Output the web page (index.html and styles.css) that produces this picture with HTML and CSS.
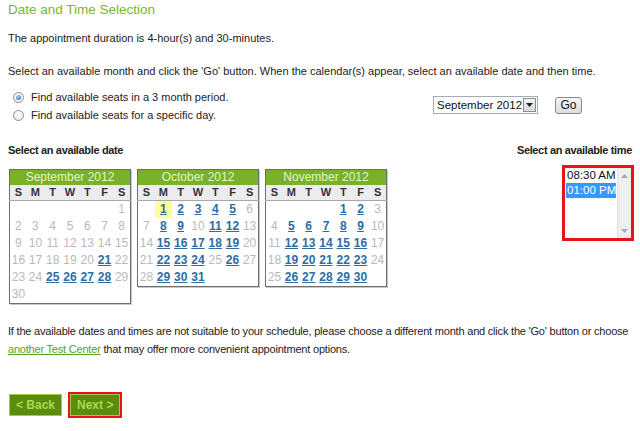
FILE: index.html
```html
<!DOCTYPE html>
<html>
<head>
<meta charset="utf-8">
<link rel="stylesheet" href="styles.css">
</head>
<body>
<div class="page">
  <h1 class="title">Date and Time Selection</h1>
  <p class="p1">The appointment duration is 4-hour(s) and 30-minutes.</p>
  <p class="p2">Select an available month and click the 'Go' button. When the calendar(s) appear, select an available date and then time.</p>

  <div class="options">
    <div class="radios">
      <div class="radio-row"><span class="radio checked"></span>Find available seats in a 3 month period.</div>
      <div class="radio-row"><span class="radio"></span>Find available seats for a specific day.</div>
    </div>
    <div class="month-pick">
      <div class="select">
        <span class="select-text">September 2012</span>
        <span class="select-btn"><svg width="7" height="4" viewBox="0 0 7 4"><path d="M0 0H7L3.5 4Z" fill="#222"/></svg></span>
      </div>
      <div class="go">Go</div>
    </div>
  </div>

  <div class="labels"><b>Select an available date</b><b>Select an available time</b></div>

  <div class="cal-row">
    <div class="cals">
      <table class="cal">
        <thead>
          <tr><th colspan="7" class="month">September 2012</th></tr>
          <tr class="dow"><th>S</th><th>M</th><th>T</th><th>W</th><th>T</th><th>F</th><th>S</th></tr>
        </thead>
        <tbody>
          <tr><td></td><td></td><td></td><td></td><td></td><td></td><td>1</td></tr>
          <tr><td>2</td><td>3</td><td>4</td><td>5</td><td>6</td><td>7</td><td>8</td></tr>
          <tr><td>9</td><td>10</td><td>11</td><td>12</td><td>13</td><td>14</td><td>15</td></tr>
          <tr><td>16</td><td>17</td><td>18</td><td>19</td><td>20</td><td class="av"><a>21</a></td><td>22</td></tr>
          <tr><td>23</td><td>24</td><td class="av"><a>25</a></td><td class="av"><a>26</a></td><td class="av"><a>27</a></td><td class="av"><a>28</a></td><td>29</td></tr>
          <tr><td>30</td><td></td><td></td><td></td><td></td><td></td><td></td></tr>
        </tbody>
      </table>

      <table class="cal">
        <thead>
          <tr><th colspan="7" class="month">October 2012</th></tr>
          <tr class="dow"><th>S</th><th>M</th><th>T</th><th>W</th><th>T</th><th>F</th><th>S</th></tr>
        </thead>
        <tbody>
          <tr><td></td><td class="av today"><a>1</a></td><td class="av"><a>2</a></td><td class="av"><a>3</a></td><td class="av"><a>4</a></td><td class="av"><a>5</a></td><td>6</td></tr>
          <tr><td>7</td><td class="av"><a>8</a></td><td class="av"><a>9</a></td><td>10</td><td class="av"><a>11</a></td><td class="av"><a>12</a></td><td>13</td></tr>
          <tr><td>14</td><td class="av"><a>15</a></td><td class="av"><a>16</a></td><td class="av"><a>17</a></td><td class="av"><a>18</a></td><td class="av"><a>19</a></td><td>20</td></tr>
          <tr><td>21</td><td class="av"><a>22</a></td><td class="av"><a>23</a></td><td class="av"><a>24</a></td><td>25</td><td class="av"><a>26</a></td><td>27</td></tr>
          <tr><td>28</td><td class="av"><a>29</a></td><td class="av"><a>30</a></td><td class="av"><a>31</a></td><td></td><td></td><td></td></tr>
        </tbody>
      </table>

      <table class="cal">
        <thead>
          <tr><th colspan="7" class="month">November 2012</th></tr>
          <tr class="dow"><th>S</th><th>M</th><th>T</th><th>W</th><th>T</th><th>F</th><th>S</th></tr>
        </thead>
        <tbody>
          <tr><td></td><td></td><td></td><td></td><td class="av"><a>1</a></td><td class="av"><a>2</a></td><td>3</td></tr>
          <tr><td>4</td><td class="av"><a>5</a></td><td class="av"><a>6</a></td><td class="av"><a>7</a></td><td class="av"><a>8</a></td><td class="av"><a>9</a></td><td>10</td></tr>
          <tr><td>11</td><td class="av"><a>12</a></td><td class="av"><a>13</a></td><td class="av"><a>14</a></td><td class="av"><a>15</a></td><td class="av"><a>16</a></td><td>17</td></tr>
          <tr><td>18</td><td class="av"><a>19</a></td><td class="av"><a>20</a></td><td class="av"><a>21</a></td><td class="av"><a>22</a></td><td class="av"><a>23</a></td><td>24</td></tr>
          <tr><td>25</td><td class="av"><a>26</a></td><td class="av"><a>27</a></td><td class="av"><a>28</a></td><td class="av"><a>29</a></td><td class="av"><a>30</a></td><td></td></tr>
        </tbody>
      </table>
    </div>

    <div class="timebox">
      <div class="listbox">
        <div class="items">
          <div class="item">08:30 AM</div>
          <div class="item selected">01:00 PM</div>
        </div>
        <div class="scrollbar">
          <svg width="7" height="4" viewBox="0 0 7 4"><path d="M0 4H7L3.5 0Z" fill="#aaa"/></svg>
          <svg width="7" height="4" viewBox="0 0 7 4"><path d="M0 0H7L3.5 4Z" fill="#aaa"/></svg>
        </div>
      </div>
    </div>
  </div>

  <p class="note">If the available dates and times are not suitable to your schedule, please choose a different month and click the 'Go' button or choose <a class="link">another Test Center</a> that may offer more convenient appointment options.</p>

  <div class="buttons">
    <div class="btn">&lt; Back</div>
    <div class="btn-frame"><div class="btn">Next &gt;</div></div>
  </div>
</div>
</body>
</html>
```

FILE: styles.css
```css
html, body {
  margin: 0;
  padding: 0;
  background: #ffffff;
}

body {
  font-family: "Liberation Sans", Arial, sans-serif;
  font-size: 11px;
  color: #222222;
}

.page {
  padding: 0 8px;
}

.title {
  margin: 0;
  padding-top: 1px;
  font-size: 13.5px;
  line-height: 18px;
  font-weight: normal;
  color: #7ab536;
}

.p1 {
  margin: 12px 0 0;
  line-height: 14px;
}

.p2 {
  margin: 19px 0 0;
  line-height: 14px;
}

.options {
  display: flex;
  align-items: flex-start;
  margin-top: 10px;
}

.radios {
  display: flex;
  flex-direction: column;
  padding-left: 5px;
}

.radio-row {
  display: flex;
  align-items: center;
  height: 18px;
  line-height: 18px;
}

.radio {
  box-sizing: border-box;
  width: 11px;
  height: 11px;
  border-radius: 50%;
  border: 1px solid #8e8f8f;
  background: radial-gradient(circle at 50% 40%, #ffffff 0%, #e6e6e6 100%);
  margin-right: 7px;
  display: flex;
  align-items: center;
  justify-content: center;
}

.radio.checked::after {
  content: "";
  width: 5px;
  height: 5px;
  border-radius: 50%;
  background: radial-gradient(circle at 40% 35%, #a9d4f5 0%, #2a6cc0 90%);
}

.month-pick {
  display: flex;
  align-items: flex-start;
  gap: 17px;
  margin-left: auto;
  margin-right: 50px;
  margin-top: 8px;
}

.select {
  box-sizing: border-box;
  display: flex;
  width: 105px;
  height: 18px;
  border: 1px solid #a5acb5;
  background: #ffffff;
}

.select-text {
  flex: 1;
  font-size: 11.5px;
  line-height: 16px;
  padding-left: 3px;
  color: #111;
  white-space: nowrap;
}

.select-btn {
  box-sizing: border-box;
  width: 15px;
  margin: 1px;
  border: 1px solid #8c8c8c;
  background: linear-gradient(#f4f4f4, #d8d8d8);
  display: flex;
  align-items: center;
  justify-content: center;
}

.go {
  box-sizing: border-box;
  width: 27px;
  height: 17px;
  margin-top: 1px;
  border: 1px solid #8a8a8a;
  border-radius: 3px;
  background: linear-gradient(#f6f6f6, #dcdcdc);
  font-size: 12px;
  line-height: 15px;
  text-align: center;
  color: #111;
}

.labels {
  display: flex;
  justify-content: space-between;
  margin-top: 19px;
  line-height: 14px;
  letter-spacing: -0.35px;
  color: #222;
}

.cal-row {
  display: flex;
  align-items: flex-start;
  margin-top: 12px;
}

.cals {
  display: flex;
  align-items: flex-start;
  gap: 6px;
  margin-left: 1px;
}

.cal {
  width: 122px;
  border-collapse: collapse;
  table-layout: fixed;
  border: 1px solid #6e6e6e;
  box-shadow: 1px 1px 0 #c8c8c8;
}

.cal th,
.cal td {
  padding: 0;
  text-align: center;
}

.cal .month {
  height: 15px;
  background: #77b22a;
  color: #e4f4c4;
  font-size: 12px;
  font-weight: normal;
  line-height: 15px;
}

.cal .dow th {
  height: 15px;
  background: #ececec;
  border-bottom: 1px solid #a8a8a8;
  font-size: 11px;
  font-weight: bold;
  line-height: 15px;
  color: #333;
}

.cal td {
  height: 17px;
  font-size: 12px;
  line-height: 17px;
  color: #b9b9b9;
}

.cal td.av a {
  color: #2e6ca4;
  font-weight: bold;
  text-decoration: underline;
}

.cal td.today {
  background: #ffff99;
}

.timebox {
  margin-left: auto;
  margin-right: -2px;
  margin-top: -4px;
  border: 3px solid #e8141c;
}

.listbox {
  display: flex;
  width: 66px;
  height: 70px;
  background: #ffffff;
}

.items {
  flex: 1;
  padding: 0 1px;
}

.item {
  font-size: 11.5px;
  line-height: 15px;
  padding-left: 1px;
  color: #111;
  white-space: nowrap;
}

.item.selected {
  background: #3399ff;
  color: #ffffff;
}

.scrollbar {
  width: 14px;
  background: #efefef;
  border-left: 1px solid #e2e2e2;
  display: flex;
  flex-direction: column;
  align-items: center;
  justify-content: space-between;
  padding: 6px 0 5px;
  box-sizing: border-box;
}

.note {
  margin: 18px 0 0;
  line-height: 18px;
  letter-spacing: -0.2px;
}

.link {
  color: #5ba01c;
  text-decoration: underline;
}

.buttons {
  display: flex;
  align-items: center;
  gap: 6px;
  margin-top: 34px;
  margin-left: 1px;
}

.btn {
  box-sizing: border-box;
  height: 22px;
  padding: 0 6px;
  background: #5b8c10;
  border: 1px solid #9ccb4c;
  color: #a9dc48;
  font-size: 12px;
  font-weight: bold;
  line-height: 20px;
}

.btn-frame {
  border: 2px solid #e8141c;
}
```
